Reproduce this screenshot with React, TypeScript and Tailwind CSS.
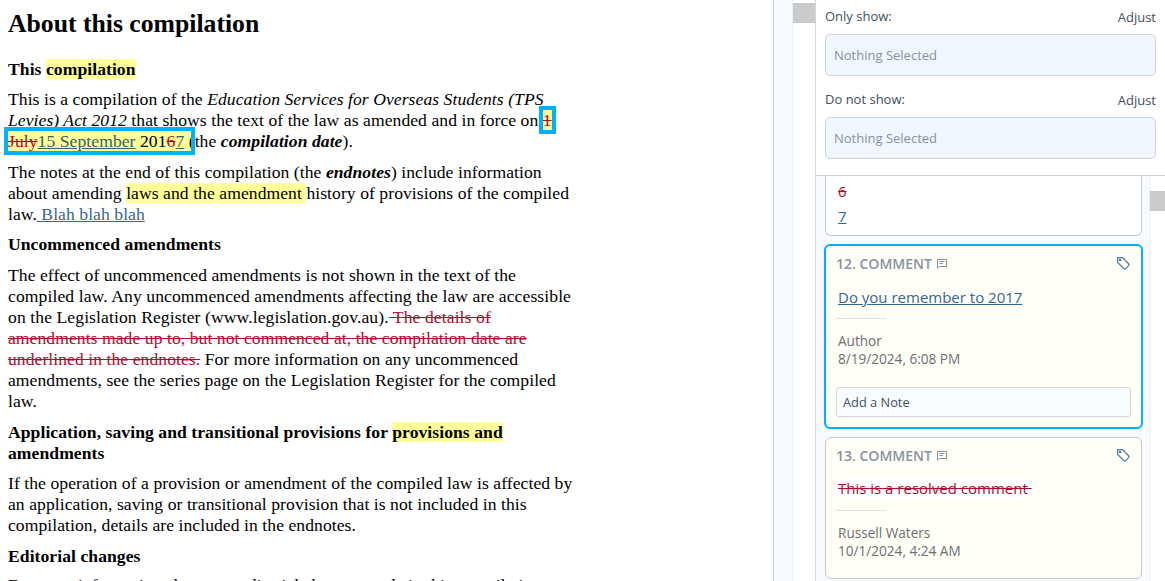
import React from 'react';
import { clsx } from 'clsx';

interface FilterFieldProps {
  label: string;
  className?: string;
}

interface CommentCardProps {
  index: number;
  active?: boolean;
  author: string;
  date: string;
  children: React.ReactNode;
  note?: boolean;
}

function CommentIcon() {
  return (
    <svg className="mt-px w-[10px] h-[10px]" viewBox="0 0 10 10" fill="none" stroke="currentColor">
      <path d="M0.5 9.3V0.5H9.5V7.5H2.3L0.5 9.3Z" />
      <path d="M2.5 2.5H7.5M2.5 4.5H6" />
    </svg>
  );
}

function TagIcon() {
  return (
    <svg className="mt-px w-[13px] h-[13px]" viewBox="0 0 13 13" fill="none" stroke="currentColor">
      <path d="M0.6 0.6H5.6L11.8 7Q12.4 7.7 11.8 8.3L8.3 11.8Q7.7 12.4 7 11.8L0.6 5.5Z" strokeWidth="1.2" />
      <rect x="2" y="2" width="2.2" height="2.2" fill="currentColor" stroke="none" />
    </svg>
  );
}

function Mark({ children }: { children: React.ReactNode }) {
  return <span className="bg-[#ffff99]">{children}</span>;
}

function Selected({ children }: { children: React.ReactNode }) {
  return <span className="relative bg-[#ffff99] outline-[4px] outline-solid outline-[#00b0ff]">{children}</span>;
}

function Del({ children }: { children: React.ReactNode }) {
  return <del className="text-[#b5082e] line-through">{children}</del>;
}

function Ins({ children }: { children: React.ReactNode }) {
  return <ins className="text-[#336699] underline">{children}</ins>;
}

function Document() {
  return (
    <main className="w-[773px] shrink-0 overflow-hidden whitespace-nowrap pl-2 text-[17.6px] leading-[21px] text-black">
      <h1 className="mt-[8px] mb-[18.7px] text-[25.7px] leading-8 font-bold">About this compilation</h1>
      <div className="flex flex-col gap-[9.57px] tracking-[0.06px]">
        <h2 className="font-bold">
          This <Mark>compilation</Mark>
        </h2>
        <p>
          This is a compilation of the <i>Education Services for Overseas Students (TPS</i>
          <br />
          <i>Levies) Act 2012</i> that shows the text of the law as amended and in force on{' '}
          <Selected>
            <Del>1</Del>
          </Selected>
          <br />
          <Selected>
            <Del>July</Del>
            <span className="text-[#336666] underline">15 September</span> 201<Del>6</Del>
            <span className="text-[#336666] underline">7</span>{' '}
            <span className="-mr-[4px]">(</span>
          </Selected>
          <span className="ml-[4px]">the </span>
          <b><i>compilation date</i></b>).
        </p>
        <p>
          The notes at the end of this compilation (the <b><i>endnotes</i></b>) include information
          <br />
          about amending <Mark>laws and the amendment </Mark>history of provisions of the compiled
          <br />
          law.<Ins> Blah blah blah</Ins>
        </p>
        <h2 className="font-bold">Uncommenced amendments</h2>
        <p>
          The effect of uncommenced amendments is not shown in the text of the
          <br />
          <span className="tracking-[0.09px]">
            compiled law. Any uncommenced amendments affecting the law are accessible
            <br />
            on the Legislation Register (www.legislation.gov.au).<Del> The details of</Del>
          </span>
          <br />
          <Del>amendments made up to, but not commenced at, the compilation date are</Del>
          <br />
          <Del>underlined in the endnotes.</Del> For more information on any uncommenced
          <br />
          amendments, see the series page on the Legislation Register for the compiled
          <br />
          law.
        </p>
        <h2 className="font-bold">
          Application, saving and transitional provisions for <Mark>provisions and</Mark>
          <br />
          amendments
        </h2>
        <p>
          If the operation of a provision or amendment of the compiled law is affected by
          <br />
          an application, saving or transitional provision that is not included in this
          <br />
          compilation, details are included in the endnotes.
        </p>
        <h2 className="font-bold">Editorial changes</h2>
        <p className="-mt-px">For more information about any editorial changes made in this compilation</p>
      </div>
    </main>
  );
}

function FilterField({ label, className }: FilterFieldProps) {
  return (
    <div className={className}>
      <div className="flex h-[28px] justify-between text-[13px] leading-5 text-[#454f5b]">
        <span>{label}</span>
        <button className="mt-px h-5">Adjust</button>
      </div>
      <div className="flex h-[42px] items-center rounded-[5px] border border-[#ccd3de] bg-[#f2f7ff] px-2 pt-px text-[13px] text-[#8792a3]">
        Nothing Selected
      </div>
    </div>
  );
}

function CommentCard({ index, active, author, date, children, note }: CommentCardProps) {
  return (
    <article
      className={clsx(
        'shrink-0 rounded-[6px] bg-[#fffff7] px-[10px] pt-[7px]',
        active ? '-mx-px border-2 border-[#00b0ff]' : 'border border-[#c4c8cc]'
      )}
    >
      <header className="flex h-5 items-center justify-between pr-px text-[14px] font-semibold text-[#8792a3]">
        <span className="flex items-center gap-[5px]">
          {index}. COMMENT
          <CommentIcon />
        </span>
        <span className="text-[#4a78ab]">
          <TagIcon />
        </span>
      </header>
      <div className={clsx('h-5 pl-[2px] text-[15px] leading-5', active ? 'mt-[14px] mb-[11px]' : 'mt-[13px] mb-[12px]')}>
        {children}
      </div>
      <div className="w-[50px] border-t border-[#dcdfe3]" />
      <div className="mt-[13px] mb-[18px] pl-[2px] text-[13.6px] leading-[18px] text-[#6b6f75]">
        <p>{author}</p>
        <p>{date}</p>
      </div>
      {note && (
        <div className="mt-[19px] mb-[10px] flex h-[30px] items-center rounded-[3px] border border-[#d0d6e0] bg-[#f9fcff] px-[6px] pt-px text-[12.8px] text-[#454f5b]">
          Add a Note
        </div>
      )}
    </article>
  );
}

function Sidebar() {
  return (
    <aside className="flex min-w-0 flex-1 flex-col border-l border-[#d3d5d9] font-['Open_Sans',sans-serif]">
      <div className="h-[176px] shrink-0 border-b border-[#d0d2da] bg-white pt-[6px] pr-[9px] pl-[9px]">
        <FilterField label="Only show:" />
        <FilterField label="Do not show:" className="mt-[13px]" />
      </div>
      <div className="flex min-h-0 flex-1">
        <div className="flex flex-1 flex-col overflow-hidden bg-[#f7fbfd] pr-[7px] pl-[9px]">
          <article className="mb-[8px] h-[60px] shrink-0 rounded-b-[6px] border border-t-0 border-[#c4c8cc] bg-white pt-[5px] pl-[12px] text-[15px]">
            <p className="leading-5"><Del>6</Del></p>
            <p className="mt-[5px] leading-5"><Ins>7</Ins></p>
          </article>
          <CommentCard index={12} active author="Author" date="8/19/2024, 6:08 PM" note>
            <Ins>Do you remember to 2017</Ins>
          </CommentCard>
          <div className="h-[8px] shrink-0" />
          <CommentCard index={13} author="Russell Waters" date="10/1/2024, 4:24 AM">
            <span className="-ml-[2px] bg-white pr-[2px] pl-[2px] whitespace-pre">
              <Del>{'This is a resolved comment '}</Del>
            </span>
          </CommentCard>
        </div>
        <div className="w-[16px] border-l border-[#eceeef] bg-white pt-[15px]">
          <div className="h-5 bg-[#cbcbcb]" />
        </div>
      </div>
    </aside>
  );
}

export default function App() {
  return (
    <div className="flex h-[581px] w-[1165px] overflow-hidden bg-white font-['Liberation_Serif',serif]">
      <Document />
      <div className="w-[20px] shrink-0 border-r border-l border-r-[#eceeef] border-l-[#c9cdd0] bg-[#f7fbfd]" />
      <div className="w-[22px] shrink-0 bg-white pt-[3px]">
        <div className="h-5 bg-[#cbcbcb]" />
      </div>
      <Sidebar />
    </div>
  );
}
